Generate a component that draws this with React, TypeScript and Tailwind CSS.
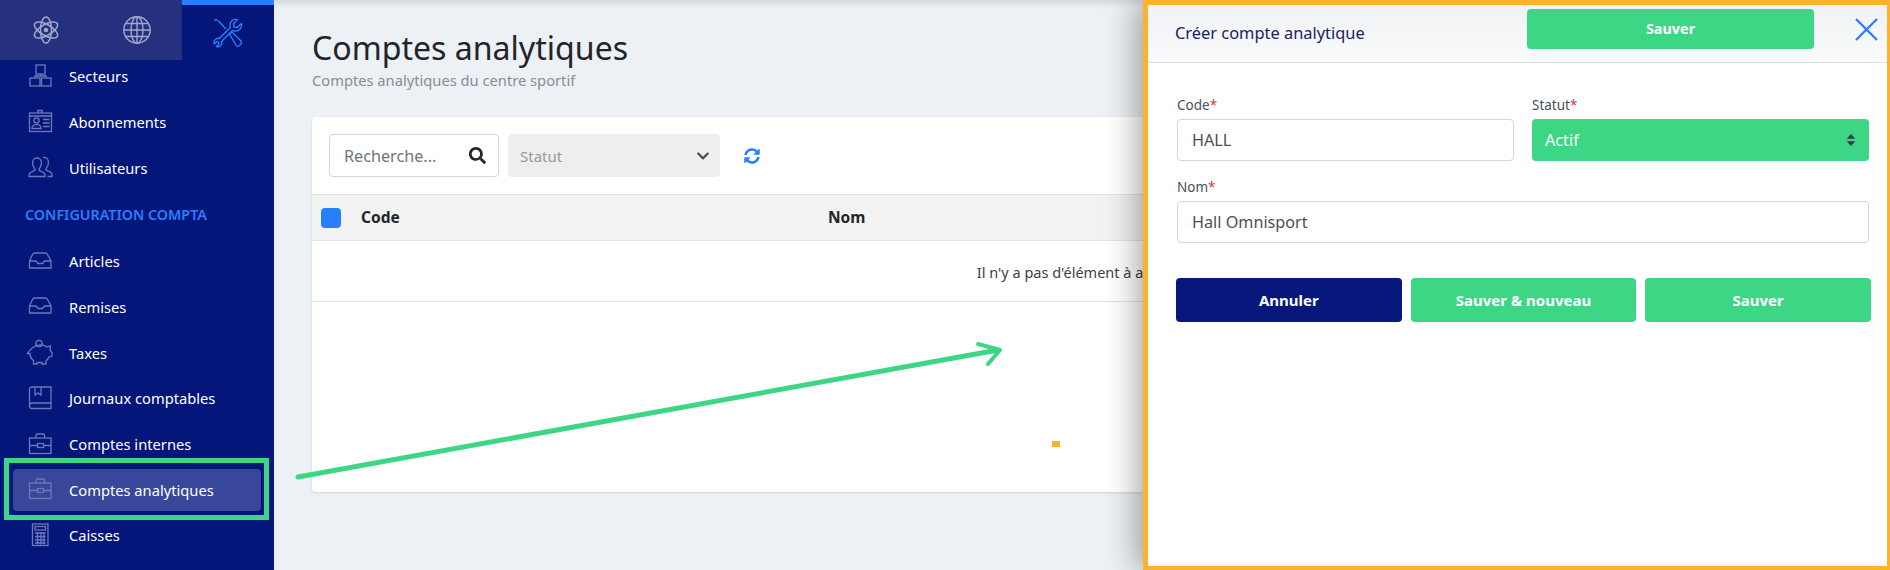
import React from 'react'
import { FaSearch, FaChevronDown, FaSyncAlt } from 'react-icons/fa'

const font = { fontFamily: '"Noto Sans", sans-serif' }

// Thin outline icons, all drawn on a 28 box
const navIcons: Record<string, React.ReactNode> = {
  sitemap: (
    <>
      <rect x="10" y="2" width="9" height="9" />
      <rect x="4" y="15" width="10" height="8" />
      <rect x="15.5" y="15" width="9.5" height="8" />
      <path d="M14.5 11V13M9 15V13H20V15" />
    </>
  ),
  card: (
    <>
      <rect x="3.5" y="4" width="22" height="18.5" />
      <path d="M12 4V1.5H16V4M3.5 7H25.5" />
      <circle cx="10.5" cy="11.5" r="2.6" />
      <path d="M6 19.5C6 16 8 16 10.5 15.5C13 16 15 16 15 19.5ZM17 10.5H23.5M17 14H23.5M17 17.5H23.5" />
    </>
  ),
  users: (
    <>
      <path d="M11 4C8 4 6.5 6.5 6.5 9C6.5 12 8 13.5 9 15V16.5C6.5 17.5 3 18 3 21V22.5H19V21C19 18 15.5 17.5 13 16.5V15C14 13.5 15.5 12 15.5 9C15.5 6.5 14 4 11 4Z" />
      <path d="M17 3.5C20 2.7 22.5 5 22.5 8.5C22.5 11.5 21 13 20 14.5V16C22.5 17 26 17.5 26 20.5V22.5H21.5" />
    </>
  ),
  inbox: (
    <>
      <path d="M3.5 13L6.5 6.5C7 5.5 7.5 5 8.5 5H19.5C20.5 5 21 5.5 21.5 6.5L25 13V20H3.5Z" />
      <path d="M3.5 13H10L12 15.5H16.5L18.5 13H25" />
    </>
  ),
  piggy: (
    <>
      <path d="M7 8.5C10 5.5 17 4.5 21 8L24.5 7L24 11C25 12 25.5 13 26 14V17L23 18C22.5 19.5 21 21 20 22V25H16V23.5H11V25H7.5V21.5C5 19.5 4 17.5 4 14.5H1.5C2.5 12 4.5 10.5 7 8.5Z" />
      <circle cx="13" cy="4.5" r="3.2" />
    </>
  ),
  book: (
    <>
      <path d="M3.5 21V4C3.5 3 4.5 2 5.5 2H25V18H6C4.5 18 3.5 19.5 3.5 21C3.5 22.5 4.5 23.5 6 23.5H25V18" />
      <path d="M9 2V10L12 8L15 10V2" />
    </>
  ),
  briefcase: (
    <>
      <rect x="3.5" y="7" width="21.5" height="15.5" />
      <path d="M10 7V4.5C10 3.5 10.5 3 11.5 3H17C18 3 18.5 3.5 18.5 4.5V7M3.5 14.5H11.5M17.5 14.5H25" />
      <rect x="11.5" y="12.5" width="6" height="4" />
    </>
  ),
  calc: (
    <>
      <rect x="6.5" y="2" width="15.5" height="21.5" />
      <rect x="9" y="4.5" width="10.5" height="3.5" />
      <path d="M9 11H19.5M9 14.5H19.5M9 18H19.5M9 21H19.5M11.5 10V22.5M15 10V22.5M18 10V22.5" />
    </>
  ),
}

function NavItem({ icon, label, active }: { icon: string; label: string; active?: boolean }) {
  return (
    <div className={`h-[42px] mx-[13px] mb-[3.7px] flex items-center rounded pl-[13px] ${active ? 'bg-[#38479a]' : ''}`}>
      <svg viewBox="0 0 28 28" className="w-[28px] h-[28px] shrink-0" fill="none" stroke="#6e78b9" strokeWidth="1.3">
        {navIcons[icon]}
      </svg>
      <span className="ml-[15px] pb-[1px] text-[14.7px] text-white">{label}</span>
    </div>
  )
}

function Sidebar() {
  return (
    <aside className="w-[274px] h-[570px] shrink-0 bg-[#04167a] overflow-hidden">
      <div className="relative z-10 flex h-[60px]">
        <div className="w-[91px] bg-[#25307f] flex items-center justify-center">
          <svg viewBox="0 0 28 28" className="w-[28px] h-[28px]" fill="none" stroke="#a2a7ca" strokeWidth="1.5">
            <ellipse cx="14" cy="14" rx="5.5" ry="13" />
            <ellipse cx="14" cy="14" rx="5.5" ry="13" transform="rotate(60 14 14)" />
            <ellipse cx="14" cy="14" rx="5.5" ry="13" transform="rotate(120 14 14)" />
            <circle cx="14" cy="14" r="1.5" fill="#a2a7ca" />
          </svg>
        </div>
        <div className="w-[91px] bg-[#25307f] flex items-center justify-center">
          <svg viewBox="0 0 28 28" className="w-[28px] h-[28px]" fill="none" stroke="#a2a7ca" strokeWidth="1.4">
            <circle cx="14" cy="14" r="13.2" />
            <ellipse cx="14" cy="14" rx="6" ry="13.2" />
            <path d="M14 1V27M1 14H27M3 7.5H25M3 20.5H25" />
          </svg>
        </div>
        <div className="w-[92px] border-t-[5px] border-[#267fff] flex items-center justify-center">
          <svg viewBox="0 0 30 30" className="w-[30px] h-[30px]" fill="none" stroke="#267fff" strokeWidth="1.4" strokeLinejoin="round">
            <path d="M24.5 1.7L20.5 5.7L21 9L24.3 9.5L28.3 5.5C29.5 9.5 26 14 21.5 13L19.5 12.6L8.5 23.5C9.5 27 6.5 29.5 3.5 28.5L6 26L5.5 24.2L3.7 23.7L1.3 26C0.3 23 2.8 19.5 6.3 20.5L17.3 9.5L17 7.5C16.5 3.5 20.5 0.5 24.5 1.7Z" />
            <path d="M1.5 3L3 1.5L6 3.5L13 11M16.5 16L19 14L28 23C29.5 25 26 29.5 23.5 28Z" />
          </svg>
        </div>
      </div>
      <div className="-mt-[4px]">
        <NavItem icon="sitemap" label="Secteurs" />
        <NavItem icon="card" label="Abonnements" />
        <NavItem icon="users" label="Utilisateurs" />
        <div className="h-[45.7px] pl-[25px] pb-[2px] flex items-center text-[14.3px] font-semibold text-[#267fff]">CONFIGURATION COMPTA</div>
        <div className="h-[2px]" />
        <NavItem icon="inbox" label="Articles" />
        <NavItem icon="inbox" label="Remises" />
        <NavItem icon="piggy" label="Taxes" />
        <NavItem icon="book" label="Journaux comptables" />
        <NavItem icon="briefcase" label="Comptes internes" />
        <NavItem icon="briefcase" label="Comptes analytiques" active />
        <NavItem icon="calc" label="Caisses" />
      </div>
    </aside>
  )
}

function Content() {
  return (
    <main className="flex-1 min-w-0 h-[570px] bg-[#edf0f4] px-[38px] shadow-[inset_0_8px_8px_-6px_rgba(0,0,0,0.15)]">
      <h1 className="pt-[26px] text-[32.1px] leading-[44px] text-[#212529]">Comptes analytiques</h1>
      <p className="pt-[1px] text-[14.7px] leading-[18px] text-[#868e96]">Comptes analytiques du centre sportif</p>
      <div className="mt-[28px] h-[375px] bg-white rounded shadow-sm">
        <div className="h-[77px] pt-[17px] pl-[17px] flex items-start">
          <div className="w-[170px] h-[43px] border border-[#d5d5d5] rounded flex items-center justify-between pl-[14px] pr-[12px]">
            <span className="pt-[2px] text-[16.2px] text-[#6c757d]">Recherche...</span>
            <FaSearch className="w-[17px] h-[17px] text-[#212529]" />
          </div>
          <div className="ml-[9px] w-[212px] h-[43px] bg-[#eeeeee] rounded flex items-center justify-between pl-[12px] pr-[10px]">
            <span className="pt-[1px] text-[15px] text-[#999999]">Statut</span>
            <FaChevronDown className="w-[14px] h-[14px] text-[#4a4a4a]" />
          </div>
          <FaSyncAlt className="ml-[24px] mt-[14px] w-[16px] h-[16px] text-[#267fff]" />
        </div>
        <div className="h-[47px] bg-[#f2f2f2] border-y border-[#e3e3e3] flex items-center pl-[9px] text-[15.5px] font-bold text-[#212529]">
          <span className="w-[20px] h-[20px] rounded bg-[#267fff]" />
          <span className="ml-[20px] pt-[1px] w-[467px]">Code</span>
          <span className="pt-[1px]">Nom</span>
        </div>
        <div className="h-[61px] pt-[3px] border-b border-[#e3e3e3] flex items-center justify-center text-[14.5px] text-[#3c4048]">
          Il n'y a pas d'élément à afficher
        </div>
      </div>
    </main>
  )
}

function Field({ label, children }: { label: string; children: React.ReactNode }) {
  return (
    <div>
      <div className="h-[18px] text-[13.5px] leading-[18px] text-[#495057]">
        {label}
        <span className="text-[#e3342f]">*</span>
      </div>
      {children}
    </div>
  )
}

const inputClass = 'h-[42px] mt-[5px] border border-[#d5d5d5] rounded flex items-center pl-[14px] text-[16.2px] text-[#495057]'
const greenBtn = 'rounded bg-[#3dd685] pt-[1px] flex items-center justify-center text-[15px] font-bold text-white'

function Drawer() {
  return (
    <section className="absolute top-0 right-0 w-[747px] h-[570px] bg-white border-t-[5px] border-l-[5px] border-r-[3px] border-b-[4px] border-[#fdb22c] shadow-[-6px_0_30px_rgba(0,0,0,0.35)]">
      <header className="h-[58px] bg-gradient-to-b from-[#f1f2f4] to-[#f9fafb] border-b border-[#dfe1e4] flex items-center pl-[27px] relative">
        <span className="text-[16.4px] text-[#1a2260]">Créer compte analytique</span>
        <button className="ml-auto mr-[73px] w-[287px] h-[40px] -mt-[10px] pt-[1px] rounded bg-[#3dd685] text-[14.4px] font-bold text-white">Sauver</button>
        <svg viewBox="0 0 24 24" className="absolute right-[9px] top-[13px] w-[23px] h-[23px]" fill="none" stroke="#267fff" strokeWidth="2.4">
          <path d="M1 1 L23 23 M23 1 L1 23" />
        </svg>
      </header>
      <div className="pt-[33px] pl-[29px] pr-[18px]">
        <div className="grid grid-cols-2 gap-x-[18px]">
          <Field label="Code">
            <div className={inputClass}>HALL</div>
          </Field>
          <Field label="Statut">
            <div className="h-[42px] mt-[5px] rounded bg-[#3dd685] flex items-center justify-between pl-[13px] pr-[13px] text-[16.2px] text-white">
              Actif
              <svg viewBox="0 0 10 14" className="w-[10px] h-[12px]" fill="#343a40">
                <path d="M5 0 L10 5.5 H0 Z M5 14 L0 8.5 H10 Z" />
              </svg>
            </div>
          </Field>
        </div>
        <div className="mt-[17px]">
          <Field label="Nom">
            <div className={inputClass}>Hall Omnisport</div>
          </Field>
        </div>
        <div className="mt-[35px] -ml-[1px] -mr-[2px] grid grid-cols-3 gap-x-[9px] h-[44px]">
          <button className="rounded bg-[#07177c] pt-[1px] text-[15px] font-bold text-white">Annuler</button>
          <button className={greenBtn}>Sauver & nouveau</button>
          <button className={greenBtn}>Sauver</button>
        </div>
      </div>
    </section>
  )
}

export default function App() {
  return (
    <div className="relative w-[1890px] h-[570px] flex overflow-hidden" style={font}>
      <Sidebar />
      <Content />
      {/* Annotations */}
      <div className="absolute left-[4px] top-[458px] w-[265px] h-[62px] border-[5px] border-[#3dd685]" />
      <svg className="absolute left-0 top-0 w-[1143px] h-[570px] pointer-events-none" viewBox="0 0 1143 570" fill="none" stroke="#3dd685" strokeWidth="5" strokeLinecap="round" strokeLinejoin="round">
        <path d="M298 477 L998 350" />
        <path d="M978 344 L1000 350 L988 364" strokeWidth="4" />
      </svg>
      <div className="absolute left-[1052px] top-[441px] w-[8px] h-[6px] bg-[#fdb22c]" />
      <Drawer />
    </div>
  )
}
